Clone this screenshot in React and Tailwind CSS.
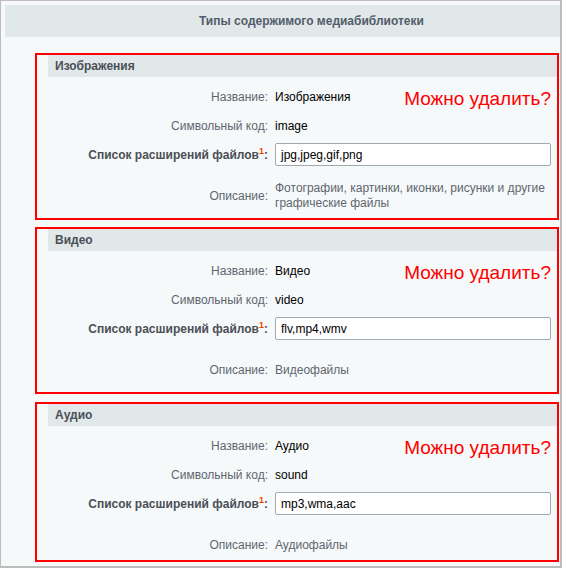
import React from 'react'

const types = [
  {
    title: 'Изображения',
    name: 'Изображения',
    code: 'image',
    ext: 'jpg,jpeg,gif,png',
    desc: 'Фотографии, картинки, иконки, рисунки и другие графические файлы',
  },
  { title: 'Видео', name: 'Видео', code: 'video', ext: 'flv,mp4,wmv', desc: 'Видеофайлы' },
  { title: 'Аудио', name: 'Аудио', code: 'sound', ext: 'mp3,wma,aac', desc: 'Аудиофайлы' },
]

function Row({ label, children, bold }) {
  return (
    <div className="grid grid-cols-[231px_1fr] gap-x-[7px] h-[29px] items-center">
      <div className={`text-right text-[12px] ${bold ? 'font-bold text-[#4b4f56]' : 'text-[#5f6670]'}`}>
        {label}
      </div>
      <div className="text-[12px] text-black">{children}</div>
    </div>
  )
}

function TypeBox({ item, last, className }) {
  return (
    <div className={`relative w-[524px] ml-[34px] border-2 border-[#ff0000] ${last ? 'pb-0' : 'pb-[7px]'} ${className}`}>
      <div className="ml-[11px] h-[22px] bg-[#e0e8ea] flex items-center pl-[7px] text-[12px] font-bold text-[#4b4f56]">
        {item.title}
      </div>
      <div className="pt-[5px]">
        <Row label="Название:">{item.name}</Row>
        <Row label="Символьный код:">{item.code}</Row>
        <Row
          bold
          label={
            <span>
              Список расширений файлов<sup className="text-[#ff3c00] text-[9px] font-bold">1</sup>:
            </span>
          }
        >
          <div className="w-[276px] h-[23px] border border-[#a3a9b1] rounded-[2px] bg-white flex items-center px-[5px] text-[12px] text-black">
            {item.ext}
          </div>
        </Row>
        <div className="grid grid-cols-[231px_1fr] gap-x-[7px] mt-[12px] min-h-[30px] items-center">
          <div className="text-right text-[12px] text-[#5f6670]">Описание:</div>
          <div className="text-[12px] leading-[15px] text-[#5f6670] pr-[12px]">{item.desc}</div>
        </div>
      </div>
      <div className="absolute right-[6px] top-[34px] text-[19px] leading-none text-[#ff0000]">Можно удалить?</div>
    </div>
  )
}

export default function App() {
  return (
    <div
      className="w-[562px] h-[568px] overflow-hidden bg-[#f5f9f9] border-l border-t border-r-2 border-b-2 border-[#bcbcbc]"
      style={{ fontFamily: '"Liberation Sans", Arial, sans-serif' }}
    >
      <div className="mt-[4px] ml-[4px] h-[32px] bg-[#e0e8ea] flex items-center pl-[194px] text-[12px] font-bold text-[#535c69]">
        Типы содержимого медиабиблиотеки
      </div>
      <TypeBox item={types[0]} className="mt-[16px]" />
      <TypeBox item={types[1]} className="mt-[7px]" />
      <TypeBox item={types[2]} className="mt-[8px]" last />
    </div>
  )
}
